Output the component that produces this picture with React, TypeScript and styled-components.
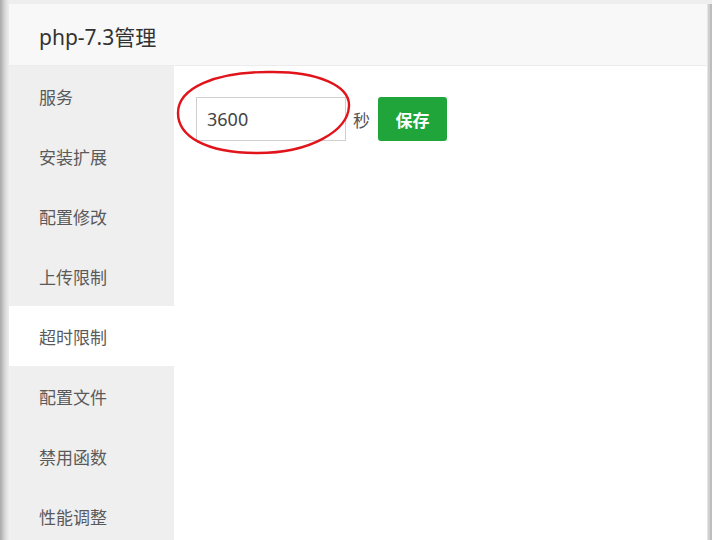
import React from "react";
import styled, { createGlobalStyle } from "styled-components";

const Global = createGlobalStyle`
  html, body { margin: 0; padding: 0; }
  body {
    width: 712px; height: 540px; overflow: hidden;
    background: #9a9a9a;
    font-family: "Noto Sans", "Noto Sans CJK SC", sans-serif;
  }
`;

const Page = styled.div`
  width: 712px;
  height: 540px;
  box-sizing: border-box;
  padding: 4px 0 0 0;
  display: flex;
  background: linear-gradient(to right, #a8a8a8 0px, #d8d8d8 5px, #eeeeee 9px, #eeeeee 100%);
`;

const Dialog = styled.div`
  margin-left: 9px;
  width: 698px;
  height: 536px;
  background: #fff;
  display: flex;
  flex-direction: column;
  overflow: hidden;
  box-shadow: 1px 0 0 #e6e6e6, 3px 0 0 #cfcfcf, 5px 0 0 #bdbdbd;
`;

const Header = styled.div`
  height: 62px;
  flex: none;
  background: #f8f8f8;
  border-bottom: 1px solid #ececec;
  display: flex;
  align-items: center;
  padding-left: 30px;
  font-size: 21px;
  color: #333;
  box-sizing: border-box;
  padding-top: 2px;
`;

const Body = styled.div`
  flex: 1;
  display: flex;
  position: relative;
`;

const Side = styled.div`
  width: 165px;
  background: #efeff0;
  display: flex;
  flex-direction: column;
`;

const Item = styled.div<{ $active?: boolean }>`
  height: 60px;
  display: flex;
  align-items: center;
  padding-left: 30px;
  font-size: 17px;
  color: #5a5a5a;
  background: ${(p) => (p.$active ? "#fff" : "transparent")};
`;

const Content = styled.div`
  flex: 1;
  padding: 31px 0 0 22px;
  position: relative;
`;

const Row = styled.div`
  display: flex;
  align-items: center;
`;

const Input = styled.div`
  width: 150px;
  height: 44px;
  box-sizing: border-box;
  border: 1px solid #cfcfcf;
  display: flex;
  align-items: center;
  padding-left: 10px;
  font-size: 18px;
  color: #444;
`;

const Unit = styled.span`
  margin: 0 8px 0 7px;
  font-size: 17px;
  color: #555;
`;

const Button = styled.div`
  width: 69px;
  height: 44px;
  border-radius: 3px;
  background: #20a53a;
  color: #fff;
  font-size: 17px;
  font-weight: 600;
  display: flex;
  align-items: center;
  justify-content: center;
`;

const Mark = styled.svg`
  position: absolute;
  left: 0;
  top: 0;
  pointer-events: none;
`;

const items = ["服务", "安装扩展", "配置修改", "上传限制", "超时限制", "配置文件", "禁用函数", "性能调整"];

export default function App() {
  return (
    <>
      <Global />
      <Page>
        <Dialog>
          <Header>php-7.3管理</Header>
          <Body>
            <Side>
              {items.map((t) => (
                <Item key={t} $active={t === "超时限制"}>{t}</Item>
              ))}
            </Side>
            <Content>
              <Row>
                <Input>3600</Input>
                <Unit>秒</Unit>
                <Button>保存</Button>
              </Row>
            </Content>
            <Mark width="698" height="200" viewBox="0 0 698 200">
              <path
                d="M 259 6 C 309 5, 341 20, 340 40 C 339 65, 301 87, 249 87 C 196 87, 169 70, 169 47 C 169 22, 206 6, 259 6 Z"
                fill="none"
                stroke="#e0141a"
                strokeWidth="2.4"
              />
            </Mark>
          </Body>
        </Dialog>
      </Page>
    </>
  );
}
